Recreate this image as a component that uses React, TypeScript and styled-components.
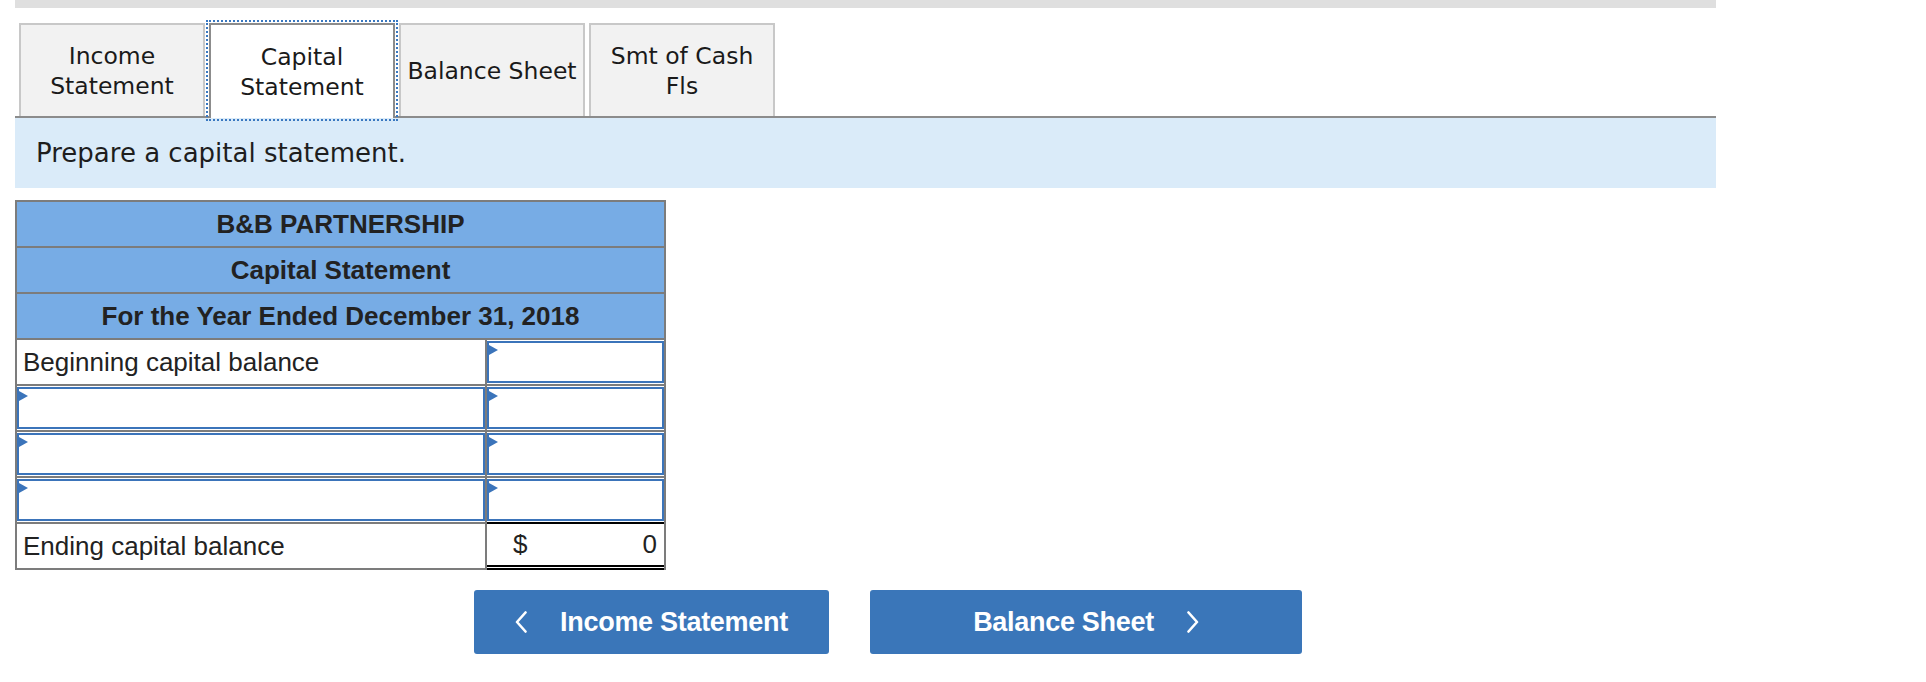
import React from "react";
import styled, { createGlobalStyle } from "styled-components";

const GlobalStyle = createGlobalStyle`
  html, body {
    margin: 0;
    padding: 0;
    background: #ffffff;
  }
  body {
    font-family: "Liberation Sans", Arial, sans-serif;
    color: #222222;
  }
  * { box-sizing: border-box; }
`;

const Page = styled.div`
  width: 1716px;
  padding-left: 15px;
`;

const TopBar = styled.div`
  height: 8px;
  background: #dfdfdf;
`;

const TabBar = styled.div`
  margin-top: 15px;
  padding-left: 4px;
  display: flex;
  gap: 4px;
  border-bottom: 2px solid #8c8c8c;
`;

const Tab = styled.button<{ $active?: boolean }>`
  width: 186px;
  height: ${(p) => (p.$active ? "95px" : "93px")};
  margin-bottom: ${(p) => (p.$active ? "-2px" : "0")};
  border: 2px solid ${(p) => (p.$active ? "#8c8c8c" : "#c8c8c8")};
  border-bottom: none;
  background: ${(p) => (p.$active ? "#ffffff" : "#f2f2f2")};
  font-family: "DejaVu Sans", Verdana, sans-serif;
  font-size: 23.5px;
  line-height: 30px;
  color: #1a1a1a;
  text-align: center;
  padding: 0 2px;
  display: flex;
  align-items: center;
  justify-content: center;
  outline: ${(p) => (p.$active ? "2px dotted #3a78c0" : "none")};
  outline-offset: 1px;
  position: relative;
  z-index: ${(p) => (p.$active ? 1 : 0)};
  cursor: pointer;
`;

const Instruction = styled.div`
  height: 70px;
  background: #daebf9;
  padding-left: 21px;
  display: flex;
  align-items: center;
  font-family: "DejaVu Sans", Verdana, sans-serif;
  font-size: 26px;
  color: #1e1e1e;
`;

const Statement = styled.div`
  margin-top: 12px;
  width: 651px;
  border: 2px solid #7c7c7c;
  font-family: "Liberation Sans", Arial, sans-serif;
  font-size: 26px;
  color: #222222;
`;

const Row = styled.div<{ $first?: boolean }>`
  display: flex;
  height: ${(p) => (p.$first ? "44px" : "46px")};
  border-top: ${(p) => (p.$first ? "none" : "2px solid #7c7c7c")};
`;

const HeaderCell = styled.div`
  flex: 1;
  background: #77ace5;
  font-weight: bold;
  display: flex;
  align-items: center;
  justify-content: center;
`;

const LabelCell = styled.div`
  width: 470px;
  border-right: 2px solid #7c7c7c;
  padding: 1px 0 1px 0;
  display: flex;
  align-items: center;
`;

const LabelText = styled.span`
  padding-left: 6px;
`;

const AmountCell = styled.div`
  flex: 1;
  padding: 1px 0 1px 0;
  display: flex;
  align-items: center;
`;

const TotalCell = styled.div`
  flex: 1;
  margin-top: -2px;
  margin-bottom: -2px;
  border-top: 2px solid #000000;
  border-bottom: 5px double #000000;
  display: flex;
  align-items: center;
  justify-content: space-between;
  padding: 0 7px 0 26px;
`;

const InputBox = styled.div`
  position: relative;
  width: 100%;
  height: 100%;
  border: 2px solid #3b74ba;
  background: #ffffff;
  &::before {
    content: "";
    position: absolute;
    left: 0;
    top: 2px;
    border-top: 5px solid transparent;
    border-bottom: 5px solid transparent;
    border-left: 9px solid #3b74ba;
  }
`;

const ButtonRow = styled.div`
  margin-top: 20px;
  padding-left: 459px;
  display: flex;
  gap: 41px;
`;

const NavButton = styled.button<{ $w: number }>`
  width: ${(p) => p.$w}px;
  height: 64px;
  background: #3a76b9;
  border: none;
  border-radius: 3px;
  color: #ffffff;
  font-family: "Liberation Sans", Arial, sans-serif;
  font-weight: bold;
  font-size: 27px;
  letter-spacing: -0.3px;
  display: flex;
  align-items: center;
  justify-content: center;
  gap: 33px;
  cursor: pointer;
`;

const Chevron = ({ dir }: { dir: "left" | "right" }) => (
  <svg width="12" height="22" viewBox="0 0 12 22" fill="none">
    <polyline
      points={dir === "left" ? "10.5,1.5 2,11 10.5,20.5" : "1.5,1.5 10,11 1.5,20.5"}
      stroke="#ffffff"
      strokeWidth="2.6"
      strokeLinecap="round"
      strokeLinejoin="round"
    />
  </svg>
);

const tabs = [
  { label: ["Income", "Statement"] },
  { label: ["Capital", "Statement"], active: true },
  { label: ["Balance Sheet"] },
  { label: ["Smt of Cash", "Fls"] },
];

export default function App() {
  return (
    <>
      <GlobalStyle />
      <Page>
        <TopBar />
        <TabBar>
          {tabs.map((t, i) => (
            <Tab key={i} $active={t.active}>
              <span>
                {t.label.map((l, j) => (
                  <React.Fragment key={j}>
                    {j > 0 && <br />}
                    {l}
                  </React.Fragment>
                ))}
              </span>
            </Tab>
          ))}
        </TabBar>
        <Instruction>Prepare a capital statement.</Instruction>
        <Statement>
          <Row $first>
            <HeaderCell>B&amp;B PARTNERSHIP</HeaderCell>
          </Row>
          <Row>
            <HeaderCell>Capital Statement</HeaderCell>
          </Row>
          <Row>
            <HeaderCell>For the Year Ended December 31, 2018</HeaderCell>
          </Row>
          <Row>
            <LabelCell>
              <LabelText>Beginning capital balance</LabelText>
            </LabelCell>
            <AmountCell>
              <InputBox />
            </AmountCell>
          </Row>
          {[0, 1, 2].map((i) => (
            <Row key={i}>
              <LabelCell>
                <InputBox />
              </LabelCell>
              <AmountCell>
                <InputBox />
              </AmountCell>
            </Row>
          ))}
          <Row>
            <LabelCell>
              <LabelText>Ending capital balance</LabelText>
            </LabelCell>
            <TotalCell>
              <span>$</span>
              <span>0</span>
            </TotalCell>
          </Row>
        </Statement>
        <ButtonRow>
          <NavButton $w={355}>
            <Chevron dir="left" />
            <span>Income Statement</span>
          </NavButton>
          <NavButton $w={432}>
            <span>Balance Sheet</span>
            <Chevron dir="right" />
          </NavButton>
        </ButtonRow>
      </Page>
    </>
  );
}
